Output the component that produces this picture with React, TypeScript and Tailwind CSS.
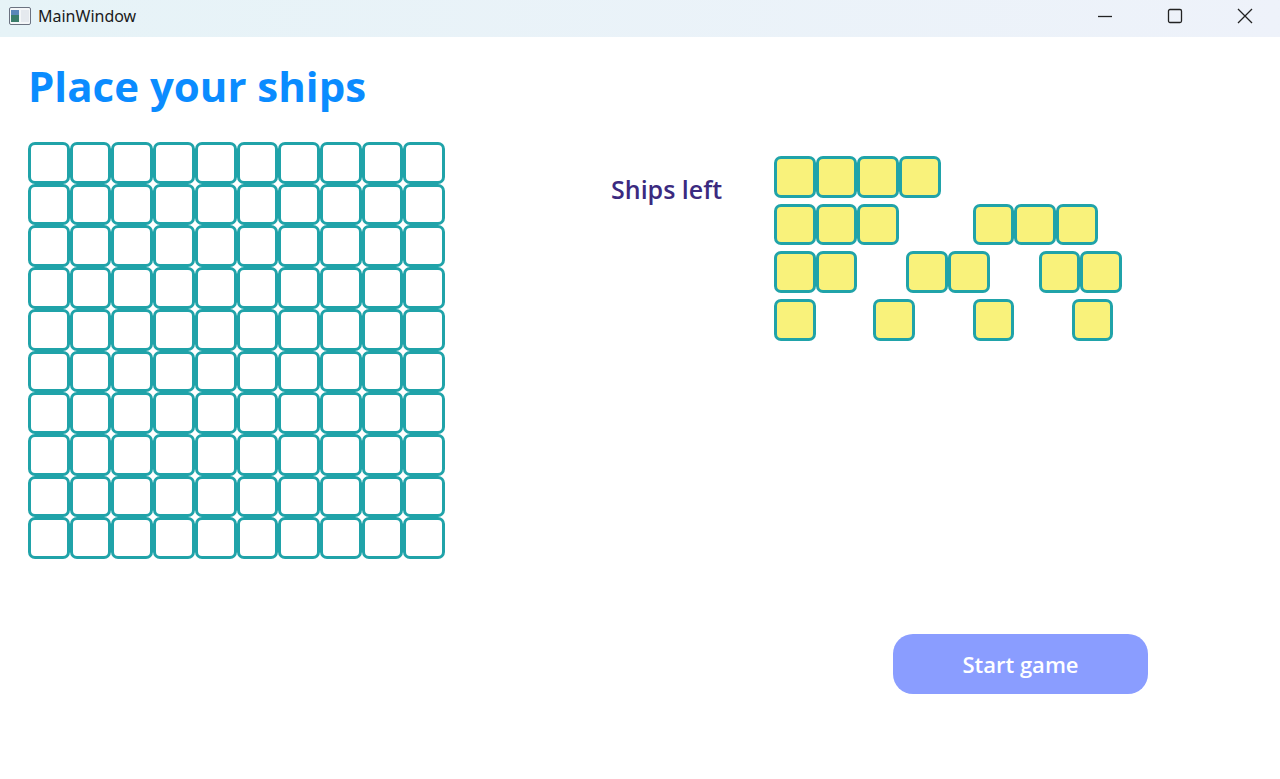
import React from "react";

const font = { fontFamily: '"Open Sans", "Noto Sans", sans-serif' };

function Cell() {
  return <div className="w-full h-full rounded-[7px] border-[3px] border-[#20a3a9] bg-white" />;
}

function ShipCell() {
  return <div className="w-[41.7px] h-[41.7px] rounded-[7px] border-[3px] border-[#20a3a9] bg-[#f9f27b]" />;
}

function Ship({ n }: { n: number }) {
  return (
    <div className="flex">
      {Array.from({ length: n }).map((_, i) => (
        <ShipCell key={i} />
      ))}
    </div>
  );
}

export default function App() {
  return (
    <div className="w-[1280px] h-[779px] bg-white flex flex-col overflow-hidden" style={font}>
      <div className="h-[37px] pb-[6px] flex items-center bg-gradient-to-r from-[#e6f3f7] to-[#eef2fa]">
        <svg width="22" height="18" viewBox="0 0 22 18" className="ml-[9px]">
          <rect x="0.5" y="0.5" width="21" height="17" rx="1.5" fill="#f4f6f8" stroke="#6b7280" />
          <rect x="2" y="3" width="8" height="12" fill="#3a7d6a" />
          <rect x="2" y="3" width="8" height="5" fill="#5a86b8" />
          <rect x="12" y="3" width="8" height="12" fill="#e5e9ee" />
        </svg>
        <span className="ml-[7px] text-[16px] text-[#1a1a1a]" style={{ fontFamily: '"Noto Sans", sans-serif' }}>MainWindow</span>
        <div className="ml-auto flex h-full">
          <div className="w-[70px] h-full flex items-center justify-center">
            <svg width="16" height="16" viewBox="0 0 16 16"><path d="M1 8.5h14" stroke="#222" strokeWidth="1.3" /></svg>
          </div>
          <div className="w-[70px] h-full flex items-center justify-center">
            <svg width="16" height="16" viewBox="0 0 16 16"><rect x="1.5" y="1.5" width="13" height="13" rx="1.5" fill="none" stroke="#222" strokeWidth="1.3" /></svg>
          </div>
          <div className="w-[70px] h-full flex items-center justify-center">
            <svg width="18" height="18" viewBox="0 0 18 18"><path d="M2 2L16 16M16 2L2 16" stroke="#222" strokeWidth="1.3" /></svg>
          </div>
        </div>
      </div>
      <div className="flex-1 flex flex-col pl-[28px]">
        <h1 className="mt-[22px] text-[42px] leading-[54px] font-bold text-[#0a8cff]">Place your ships</h1>
        <div className="flex mt-[29px]">
          <div className="w-[417px] h-[417px] grid grid-cols-10 grid-rows-10">
            {Array.from({ length: 100 }).map((_, i) => (
              <Cell key={i} />
            ))}
          </div>
          <div className="ml-[166px] w-[163px] mt-[31px] text-[25px] leading-[32px] font-semibold text-[#3b2a80] h-fit">Ships left</div>
          <div className="mt-[14px] flex flex-col gap-[6px] w-[397px]">
            <div className="grid grid-cols-1">
              <Ship n={4} />
            </div>
            <div className="grid grid-cols-2">
              <Ship n={3} />
              <Ship n={3} />
            </div>
            <div className="grid grid-cols-3">
              <Ship n={2} />
              <Ship n={2} />
              <Ship n={2} />
            </div>
            <div className="grid grid-cols-4">
              <Ship n={1} />
              <Ship n={1} />
              <Ship n={1} />
              <Ship n={1} />
            </div>
          </div>
        </div>
        <div className="flex mt-[75px] pl-[865px]">
          <button className="w-[255px] h-[60px] rounded-[20px] bg-[#8a9dff] text-white text-[22px] font-semibold">Start game</button>
        </div>
      </div>
    </div>
  );
}
